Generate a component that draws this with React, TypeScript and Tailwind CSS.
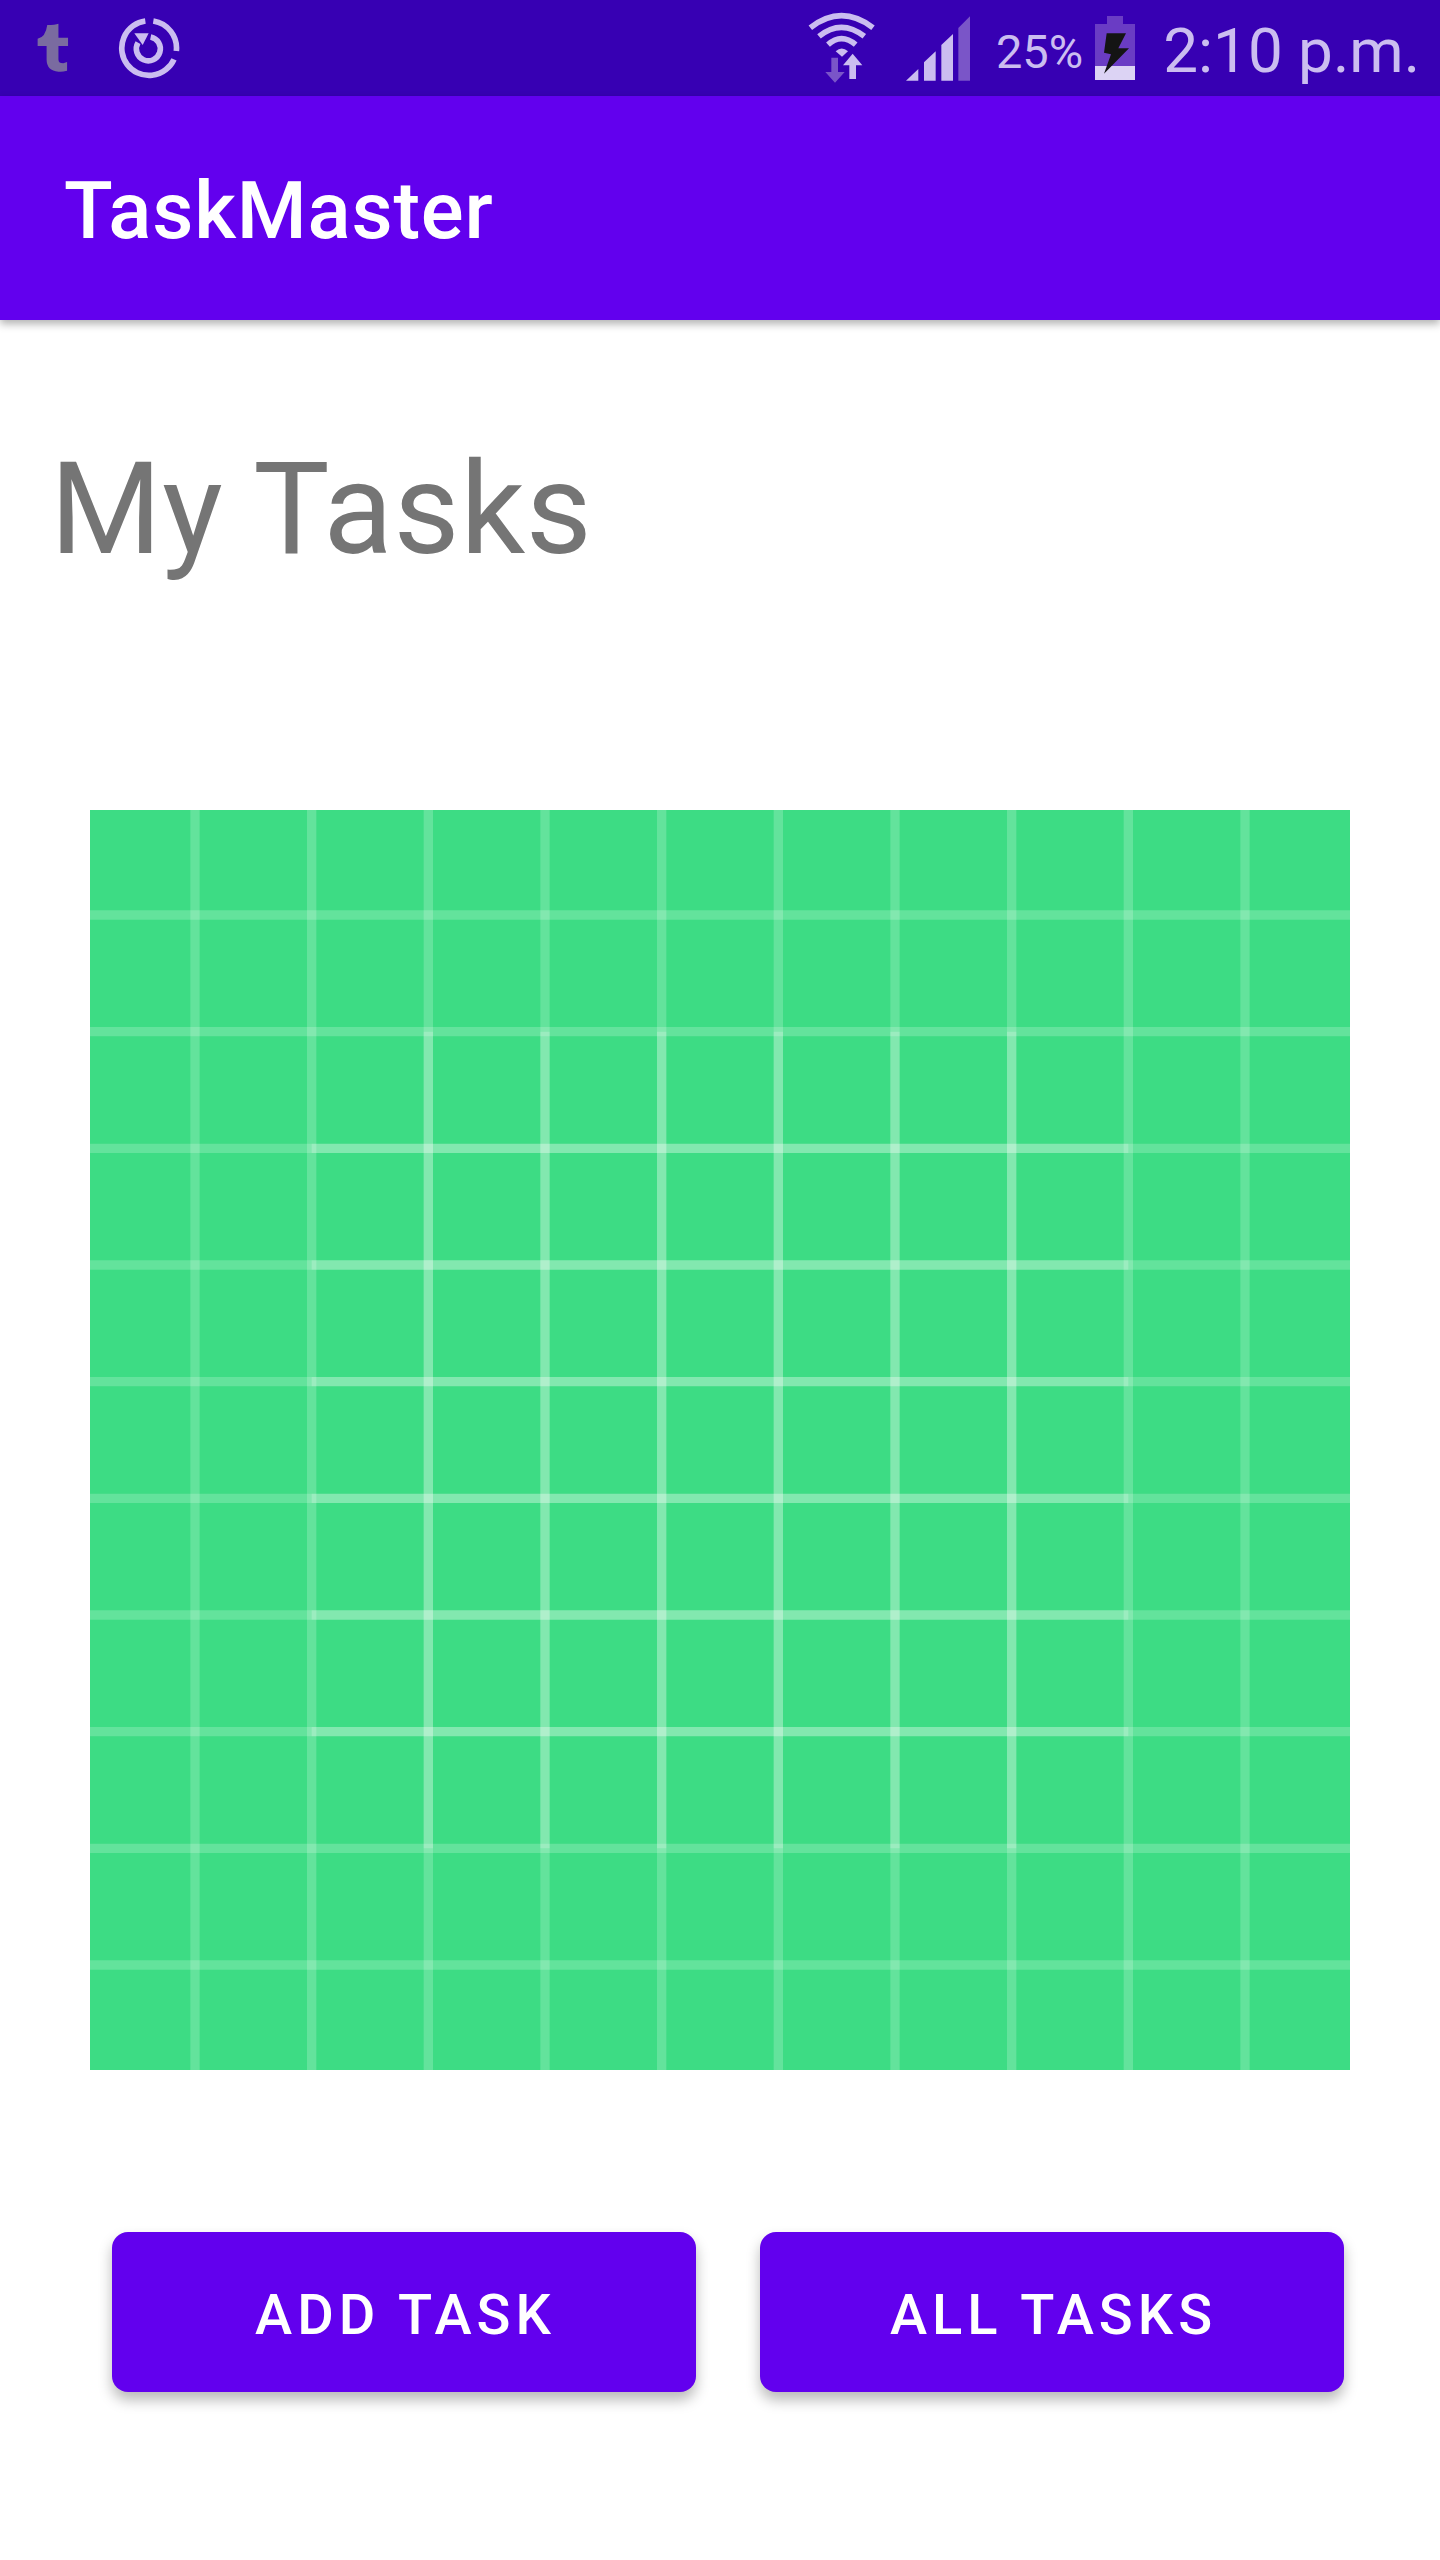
const fullLines = [9, 19, 29, 39, 49, 59, 69, 79, 89, 99];
const innerLines = [29, 39, 49, 59, 69, 79];

function TumblrIcon() {
  return (
    <svg width="32" height="52" viewBox="108 66 100 156" className="shrink-0">
      <path
        d="M140 72Q165 72 175 68L175 112L205 112L205 138L175 138L175 180Q175 192 190 192L202 188L202 215Q185 220 175 218Q138 215 138 180L138 138L110 138L110 115Q135 110 140 72Z"
        fill="#7a6ba0"
      />
    </svg>
  );
}

function SyncIcon() {
  return (
    <svg width="62" height="62" viewBox="354 50 186 186" className="shrink-0">
      <g fill="none" stroke="#cbbdf0" strokeWidth="17">
        <path d="M460 62A82 82 0 0 1 529 152" />
        <path d="M522 177A82 82 0 1 1 436 62" />
        <path d="M452 110A36 36 0 1 1 414 127" />
      </g>
      <path d="M403 99L446 99L428 134Z" fill="#cbbdf0" />
    </svg>
  );
}

function WifiIcon() {
  return (
    <svg width="68" height="72" viewBox="85 35 204 216" className="shrink-0">
      <g fill="none" stroke="#cbbdf0" strokeWidth="17">
        <path d="M92 82Q185 10 280 82" />
        <path d="M118 108Q185 54 254 108" />
        <path d="M145 133Q185 97 228 133" />
      </g>
      <path d="M168 153Q186 136 205 153L187 169Z" fill="#cbbdf0" />
      <path d="M155 172L175 172L175 215L195 215L166 247L137 215L155 215Z" fill="#7a55c8" />
      <path d="M209 236L229 236L229 195L248 195L219 160L190 195L209 195Z" fill="#cbbdf0" />
    </svg>
  );
}

function SignalIcon() {
  return (
    <svg width="64" height="65" viewBox="378 46 192 195" className="shrink-0">
      <path d="M378 240L415 205L415 240Z" fill="#cbbdf0" />
      <path d="M432 240L432 185L467 152L467 240Z" fill="#cbbdf0" />
      <path d="M484 240L484 133L519 100L519 240Z" fill="#cbbdf0" />
      <path d="M535 240L535 82L570 47L570 240Z" fill="#7a55c8" />
    </svg>
  );
}

function BatteryIcon() {
  return (
    <svg width="40" height="64" viewBox="-15 45 120 192" className="shrink-0">
      <path d="M21 45L69 45L69 69L105 69L105 195L-15 195L-15 69L21 69Z" fill="#6a3cc4" />
      <rect x="-15" y="195" width="120" height="42" fill="#dcd3f4" />
      <path d="M20 97L78 97L55 142L87 142L12 218L33 160L12 155Z" fill="#141414" />
    </svg>
  );
}

function LauncherGrid() {
  return (
    <svg width="1260" height="1260" viewBox="0 0 108 108" className="block">
      <rect width="108" height="108" fill="#3ddc84" />
      <g stroke="#ffffff" strokeOpacity="0.2" strokeWidth="0.8">
        {fullLines.map((n) => (
          <path key={`v${n}`} d={`M${n} 0L${n} 108`} />
        ))}
        {fullLines.map((n) => (
          <path key={`h${n}`} d={`M0 ${n}L108 ${n}`} />
        ))}
        {innerLines.map((n) => (
          <path key={`iv${n}`} d={`M${n} 19L${n} 89`} />
        ))}
        {innerLines.map((n) => (
          <path key={`ih${n}`} d={`M19 ${n}L89 ${n}`} />
        ))}
      </g>
    </svg>
  );
}

function ActionButton({ label }: { label: string }) {
  return (
    <button className="flex h-[160px] w-[584px] items-center justify-center rounded-2xl bg-[#6200ee] pl-[3px] pt-[6px] text-[56px] font-medium tracking-[5px] text-white shadow-[0_8px_14px_rgba(0,0,0,0.28)]">
      {label}
    </button>
  );
}

export default function App() {
  return (
    <div className="flex min-h-[2560px] w-[1440px] flex-col bg-white font-['Roboto',sans-serif]">
      {/* Status bar */}
      <div className="flex h-[96px] items-center bg-[#3700b3] pl-[37px] pr-[20px] text-[#cbbdf0]">
        <TumblrIcon />
        <div className="ml-[49px]">
          <SyncIcon />
        </div>
        <div className="ml-auto">
          <WifiIcon />
        </div>
        <div className="ml-[30px]">
          <SignalIcon />
        </div>
        <span className="ml-[26px] mt-[6px] text-[47px] leading-none">25%</span>
        <div className="ml-[12px]">
          <BatteryIcon />
        </div>
        <span className="ml-[28px] mt-[6px] text-[62px] leading-none">2:10 p.m.</span>
      </div>

      {/* App bar */}
      <div className="flex h-[224px] items-center bg-[#6200ee] pl-[64px] pt-[6px] shadow-[0_4px_8px_rgba(0,0,0,0.3)]">
        <h1 className="text-[80px] font-medium leading-none tracking-[0.8px] text-white">TaskMaster</h1>
      </div>

      <h2 className="ml-[50px] mt-[109px] text-[128px] font-normal leading-[160px] tracking-[0.6px] text-[#757575]">My Tasks</h2>

      <div className="ml-[90px] mt-[221px]">
        <LauncherGrid />
      </div>

      <div className="ml-[112px] mt-[162px] flex gap-[64px]">
        <ActionButton label="ADD TASK" />
        <ActionButton label="ALL TASKS" />
      </div>
    </div>
  );
}
